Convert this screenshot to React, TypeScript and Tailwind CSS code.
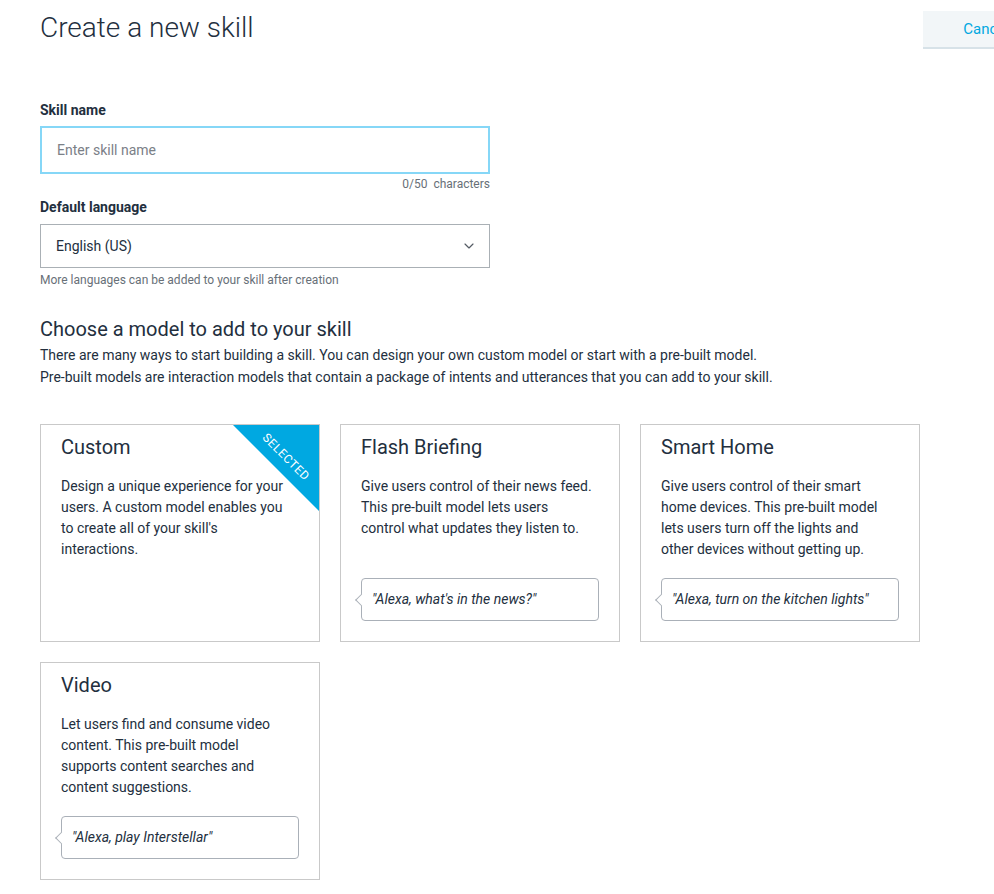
import React from 'react';
import { ChevronDown } from 'lucide-react';

type Model = {
  title: string;
  body: string;
  utterance?: string;
  selected?: boolean;
};

const models: Model[] = [
  {
    title: 'Custom',
    body: "Design a unique experience for your users. A custom model enables you to create all of your skill's interactions.",
    selected: true,
  },
  {
    title: 'Flash Briefing',
    body: 'Give users control of their news feed. This pre-built model lets users control what updates they listen to.',
    utterance: '"Alexa, what\'s in the news?"',
  },
  {
    title: 'Smart Home',
    body: 'Give users control of their smart home devices. This pre-built model lets users turn off the lights and other devices without getting up.',
    utterance: '"Alexa, turn on the kitchen lights"',
  },
  {
    title: 'Video',
    body: 'Let users find and consume video content. This pre-built model supports content searches and content suggestions.',
    utterance: '"Alexa, play Interstellar"',
  },
];

function ModelCard({ model }: { model: Model }) {
  return (
    <div className="relative flex h-[218px] flex-col overflow-hidden border border-[#c9c9c9] bg-white px-5 pt-[8px] pb-5">
      {model.selected && (
        <div className="absolute top-0 right-0 h-[86px] w-[86px] bg-[#00a8e1] [clip-path:polygon(0_0,100%_0,100%_100%)]">
          <span className="absolute top-[32px] left-[53px] -translate-x-1/2 -translate-y-1/2 rotate-45 text-[12px] leading-none tracking-[0.5px] text-white">
            SELECTED
          </span>
        </div>
      )}
      <h3 className="text-[20px] leading-[28px] text-[#232f3e]">{model.title}</h3>
      <p className="mt-[15px] max-w-[232px] text-[14px] leading-[21px] text-[#232f3e]">{model.body}</p>
      {model.utterance && (
        <div className="relative mt-auto flex h-[43px] items-center rounded-[4px] border border-[#aab0b8] bg-white px-[10px]">
          <span className="absolute top-1/2 -left-[5px] h-[9px] w-[9px] -translate-y-1/2 rotate-45 border-b border-l border-[#aab0b8] bg-white" />
          <span className="text-[14px] italic text-[#232f3e]">{model.utterance}</span>
        </div>
      )}
    </div>
  );
}

export default function App() {
  return (
    <div className="min-h-[894px] w-full overflow-hidden bg-white font-['Roboto','Liberation_Sans',sans-serif] text-[#232f3e]">
      <div className="w-[1049px]">
        <div className="flex items-start pl-10">
          <h1 className="pt-[10px] text-[28px] leading-[36px] font-light text-[#232f3e]">Create a new skill</h1>
          <button className="mt-[11px] ml-auto h-[38px] border-b-2 border-[#d7e2e8] bg-[#f2f6f8] px-10 text-[15px] text-[#00a8e1]">
            Cancel
          </button>
        </div>

        <div className="mt-[51px] ml-10 w-[450px]">
          <label className="block text-[14px] leading-[21px] font-bold text-[#232f3e]">Skill name</label>
          <input
            placeholder="Enter skill name"
            className="mt-[5px] block h-[48px] w-full border-2 border-[#86d7f7] px-[15px] text-[14px] text-[#232f3e] outline-none placeholder:text-[#7b8087]"
          />
          <div className="mt-[2px] text-right text-[12px] leading-[16px] text-[#687078]">0/50&nbsp; characters</div>

          <label className="mt-[5px] block text-[14px] leading-[21px] font-bold text-[#232f3e]">Default language</label>
          <div className="mt-[6px] flex h-[44px] items-center justify-between border border-[#aab0b5] pr-[12px] pl-[15px]">
            <span className="text-[14px] text-[#232f3e]">English (US)</span>
            <ChevronDown className="h-[16px] w-[16px] text-[#545b64]" strokeWidth={1.75} />
          </div>
          <div className="mt-[4px] text-[12px] leading-[16px] text-[#687078]">More languages can be added to your skill after creation</div>
        </div>

        <div className="mt-[27px] ml-10">
          <h2 className="text-[20px] leading-[28px] text-[#232f3e]">Choose a model to add to your skill</h2>
          <p className="mt-[1px] text-[14px] leading-[22px] text-[#232f3e]">
            There are many ways to start building a skill. You can design your own custom model or start with a pre-built model.
            <br />
            Pre-built models are interaction models that contain a package of intents and utterances that you can add to your skill.
          </p>
        </div>

        <div className="mt-[36px] ml-10 grid w-[880px] grid-cols-3 gap-5">
          {models.map((m) => (
            <ModelCard key={m.title} model={m} />
          ))}
        </div>
      </div>
    </div>
  );
}
